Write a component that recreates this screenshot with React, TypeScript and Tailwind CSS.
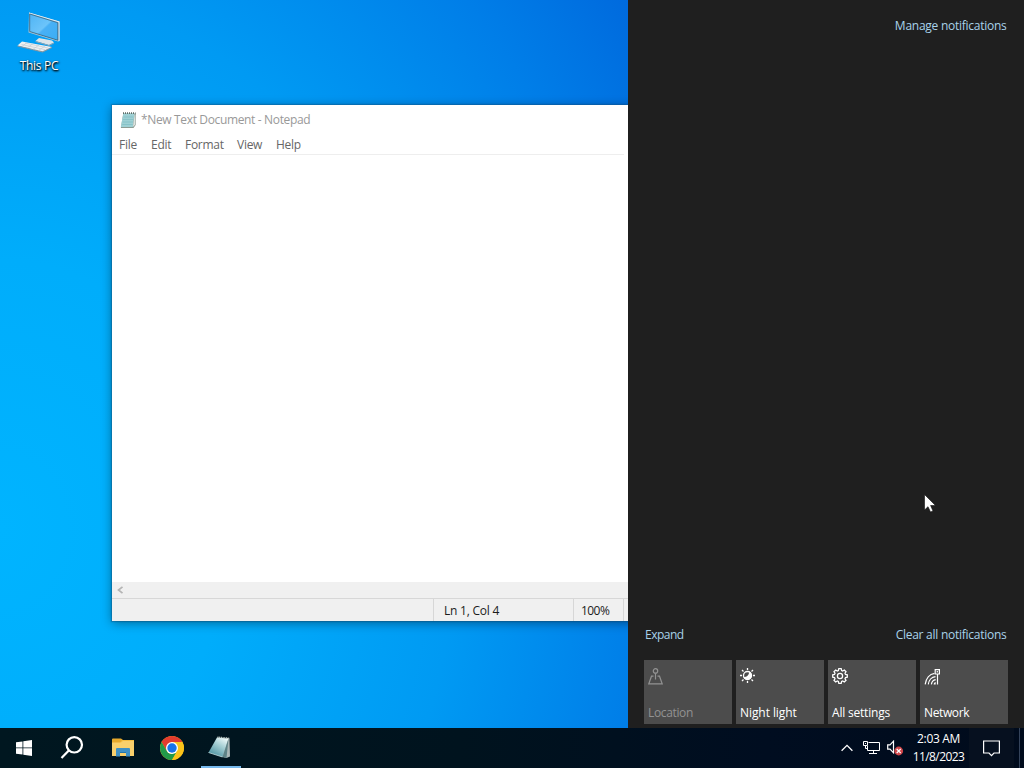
import type { ReactNode } from 'react'
import clsx from 'clsx'

const FONT = "font-['Open_Sans','Noto_Sans',sans-serif]"

const MENU = [
  { label: 'File', width: 'w-8' },
  { label: 'Edit', width: 'w-[34px]' },
  { label: 'Format', width: 'w-[52px]' },
  { label: 'View', width: 'w-[39px]' },
  { label: 'Help', width: 'w-8' },
]

function ThisPcIcon() {
  return (
    <svg width="44" height="42" viewBox="0 0 44 42">
      <defs>
        <linearGradient id="screen" x1="0" y1="0" x2="1" y2="1">
          <stop offset="0" stopColor="#4fb4f4" />
          <stop offset="0.5" stopColor="#6cc4fa" />
          <stop offset="0.55" stopColor="#48b0f5" />
          <stop offset="1" stopColor="#3aaef6" />
        </linearGradient>
      </defs>
      <path d="M12 0.500 L42.500 9.500 V29 L41 29.500 L11.500 20.500 Z" fill="#a9c6d8" />
      <path d="M12 0.500 L42.500 9.500 V29 L41.700 29.300 V10.300 L12 1.300 Z" fill="#e6eff4" />
      <path d="M12.700 2 L40.800 10.700 V28.200 L12.700 19.500 Z" fill="url(#screen)" stroke="#2f617f" strokeWidth="0.8" />
      <path d="M22 26 L35 28.500 L37 30.500 L32 33 L18.500 29 Z" fill="#dde5e9" />
      <path d="M18.500 29 L32 33 L37 30.500 V31.500 L32 34 L18.500 30 Z" fill="#8fa5b2" />
      <path d="M5 29.500 L35 35 L25.500 40 L0.500 33.500 Z" fill="#eef0f1" />
      <path d="M0.500 33.500 L25.500 39.300 L35 35 V36 L25.500 40.500 L0.500 34.500 Z" fill="#8497a3" />
      <path d="M4.500 32.500 L28 37.700 M8 31 L31 36 M10 30.500 L5 34.500 M16 31.700 L10 36 M22 33 L16 37.300 M28 34 L21.500 38.500" stroke="#c3ccd2" strokeWidth="0.7" />
    </svg>
  )
}

function NotepadSmallIcon() {
  return (
    <svg width="17" height="17" viewBox="0 0 17 17">
      <path d="M3.300 1.500 H16 V12.500 L13.500 16 H0.800 Z" fill="#8c9b93" />
      <path d="M3.300 1.500 H14.500 L12.800 15 H0.800 Z" fill="#9ed0d4" />
      <path d="M3.500 5 H13.500 M3 7.500 H13.300 M2.600 10 H13 M2.200 12.500 H12.700" stroke="#82bfc5" strokeWidth="0.8" />
      <path d="M14.600 2.500 L12.900 15 L15.500 12.300 V2.500 Z" fill="#dce3df" />
      <path d="M3 1.200 H15.500" stroke="#5d6c67" strokeWidth="1.800" strokeDasharray="1 1" />
    </svg>
  )
}

function NotepadTaskIcon() {
  return (
    <svg width="24" height="24" viewBox="0 0 24 24">
      <defs>
        <linearGradient id="pad" x1="0.8" y1="0" x2="0.2" y2="1">
          <stop offset="0" stopColor="#f0fbfb" />
          <stop offset="0.4" stopColor="#a5cfd4" />
          <stop offset="1" stopColor="#438b9a" />
        </linearGradient>
      </defs>
      <path d="M19 2 L21.500 2.500 L22 20.500 L18.500 22 L13 20.500 Z" fill="#a9b7b7" />
      <path d="M9 1.500 L20.500 2.500 L14.500 21 L0.500 16.500 Z" fill="url(#pad)" />
      <path d="M20.500 2.500 L14.500 21 L18.500 22 Z" fill="#5d8387" />
      <path d="M9.500 1.200 L21.500 2.300" stroke="#c6d2ce" strokeWidth="1.500" strokeDasharray="1 0.7" />
      <path d="M0.500 16.500 L14.500 21" stroke="#c3dde0" strokeWidth="0.8" />
    </svg>
  )
}

function WindowsLogo() {
  return (
    <svg width="16" height="16" viewBox="0 0 16 16" fill="#fff">
      <path d="M0 2.300 L6.500 1.400 V7.500 H0 Z M7.300 1.300 L16 0 V7.500 H7.300 Z M0 8.300 H6.500 V14.600 L0 13.700 Z M7.300 8.300 H16 V16 L7.300 14.700 Z" />
    </svg>
  )
}

function SearchGlyph() {
  return (
    <svg width="24" height="24" viewBox="0 0 24 24" fill="none" stroke="#fff" strokeWidth="2.200">
      <circle cx="14.300" cy="8.800" r="7.700" />
      <path d="M8.800 14.400 L1.500 22" />
    </svg>
  )
}

function FolderIcon() {
  return (
    <svg width="22" height="20" viewBox="0 0 22 20">
      <path d="M0 1.500 Q0 0.500 1 0.500 H9 L11 2 H21 Q22 2 22 3 V18 H0 Z" fill="#e6a92c" />
      <path d="M10 2 H22 V5 H8 Z" fill="#f4bd40" />
      <path d="M0 4.500 H9 L11 3 H22 V18 H0 Z" fill="#f9d06c" />
      <path d="M4 18.500 V11 Q4 10 5 10 H17 Q18 10 18 11 V18.500 H14 V14 H8 V18.500 Z" fill="#3f90c4" />
      <path d="M8 14 H14 V15 H8 Z" fill="#2276ad" />
    </svg>
  )
}

function ChromeIcon() {
  return (
    <svg width="24" height="24" viewBox="0 0 24 24">
      <circle cx="12" cy="12" r="12" fill="#fbc116" />
      <path d="M1.610 6 A12 12 0 0 1 22.390 6 H12 L6.800 15 Z" fill="#e33b2e" />
      <path d="M1.610 6 L6.800 15 A6 6 0 0 0 12 18 L17.200 15 L12 24 A12 12 0 0 1 1.610 6 Z" fill="#229a49" />
      <path d="M12 6 H22.390 A12 12 0 0 1 12 24 L17.200 15 Z" fill="#fcc31a" />
      <circle cx="12" cy="12" r="6" fill="#fff" />
      <circle cx="12" cy="12" r="4.700" fill="#1a73e8" />
    </svg>
  )
}

function LocationIcon() {
  return (
    <svg width="16" height="18" viewBox="0 0 16 18" fill="none" stroke="#929292" strokeWidth="1.200">
      <circle cx="7.500" cy="2.900" r="2.200" />
      <path d="M7.500 5.200 V11.500" />
      <path d="M5.500 8.200 H3.500 L0.800 15.800 H14.200 L11.500 8.200 H9.500" />
    </svg>
  )
}

function NightLightIcon() {
  return (
    <svg width="16" height="16" viewBox="0 0 16 16" fill="none" stroke="#fff" strokeWidth="1.300">
      <path d="M7.500 0 V2 M7.500 13 V15 M0 7.500 H2 M13 7.500 H15 M2 2 L3.500 3.500 M11.500 11.500 L13 13 M2 13 L3.500 11.500 M11.500 3.500 L13 2" />
      <circle cx="7.500" cy="7.500" r="4" />
      <path d="M9.200 3.600 A4.300 4.300 0 1 1 3.400 8.700 C6.500 9.800 9.300 7 9.200 3.600 Z" fill="#fff" stroke="none" />
    </svg>
  )
}

function SettingsIcon() {
  return (
    <svg width="16" height="16" viewBox="0 0 16 16" fill="none" stroke="#fff" strokeWidth="1.250">
      <path d="M6.800 0.700 H9.200 L9.600 2.500 L10.700 3 L12.300 2 L14 3.700 L13 5.300 L13.500 6.400 L15.300 6.800 V9.200 L13.500 9.600 L13 10.700 L14 12.300 L12.300 14 L10.700 13 L9.600 13.500 L9.200 15.300 H6.800 L6.400 13.500 L5.300 13 L3.700 14 L2 12.300 L3 10.700 L2.500 9.600 L0.700 9.200 V6.800 L2.500 6.400 L3 5.300 L2 3.700 L3.700 2 L5.300 3 L6.400 2.500 Z" />
      <circle cx="8" cy="8" r="2.600" />
    </svg>
  )
}

function NetworkIcon() {
  return (
    <svg width="17" height="17" viewBox="0 0 17 17" fill="none" stroke="#fff" strokeWidth="1.200">
      <path d="M1.200 16.300 C2 10.500 5.500 6 10.500 5.300 M4.300 16.300 C4.800 12.500 7.500 9 11.500 8.600 M7.400 16.300 C7.700 14 9.300 12 11.700 11.600" />
      <path d="M9.600 16.500 Q9.800 14.300 11.700 14 V16.500 Z" fill="#fff" stroke="none" />
      <path d="M11.200 1.700 H15.400 V6 H11.200 Z M13.500 6 V16.500 M13.300 3 V4.500" />
    </svg>
  )
}

function MonitorTrayIcon() {
  return (
    <svg width="17" height="14" viewBox="0 0 17 14" fill="none" stroke="#fff">
      <path d="M5.500 1.500 H16.500 V9.500 H4.500 V5 M10.500 9.500 V12.500 M6 12.500 H14" />
      <path d="M0.500 0.500 H4.500 V4.500 H0.500 Z M2.500 4.500 V7.500 H5 M2 2.500 H3" />
    </svg>
  )
}

function MutedIcon() {
  return (
    <svg width="17" height="16" viewBox="0 0 17 16" fill="none">
      <path d="M0.700 4.800 H3 L6.500 1.200 V12.800 L3 9.200 H0.700 Z" stroke="#fff" strokeWidth="1.200" />
      <circle cx="11.700" cy="11" r="4.400" fill="#d0464a" />
      <path d="M9.700 9 L13.700 13 M13.700 9 L9.700 13" stroke="#fff" strokeWidth="1.200" />
    </svg>
  )
}

function NotificationIcon() {
  return (
    <svg width="17" height="17" viewBox="0 0 17 17" fill="none" stroke="#fff" strokeWidth="1.200">
      <path d="M0.600 1 H16.400 V13 H11 L8.500 15.700 L6 13 H0.600 Z" />
    </svg>
  )
}

function NotepadWindow() {
  return (
    <section className="absolute left-28 top-[105px] flex h-[516px] w-[620px] flex-col bg-white shadow-[0_2px_10px_rgba(0,0,0,0.4),0_0_1px_1px_rgba(20,90,140,0.35)]">
      <header className="flex h-[30px] items-center gap-1 pl-2 text-[#999]">
        <NotepadSmallIcon />
        <span className="text-[12px] tracking-[-0.35px]">*New Text Document - Notepad</span>
      </header>
      <nav className="flex h-[19px] items-center pl-[7px] text-[12px] text-[#666]">
        {MENU.map(item => (
          <span key={item.label} className={clsx('tracking-[-0.27px]', item.width)}>{item.label}</span>
        ))}
      </nav>
      <div className="mr-[108px] h-px bg-[#eeeeee]" />
      <div className="flex-1" />
      <div className="flex h-4 items-center bg-[#f0f0f0] pl-1">
        <svg width="8" height="8" viewBox="0 0 8 8" fill="none" stroke="#b4b4b4" strokeWidth="1.700">
          <path d="M6.500 0.800 L2.500 4 L6.500 7.200" />
        </svg>
      </div>
      <footer className="flex h-[23px] border-t border-[#d7d7d7] bg-[#f0f0f0] text-[12px] text-[#1c1c1c]">
        <div className="w-[321px]" />
        <div className="flex w-[140px] items-center border-l border-[#d7d7d7] pl-2.5 pt-0.5 tracking-[-0.22px]">Ln 1, Col 4</div>
        <div className="flex w-[50px] items-center border-l border-[#d7d7d7] pl-[7px] pt-0.5 tracking-[-0.55px]">100%</div>
        <div className="flex-1 border-l border-[#d7d7d7]" />
      </footer>
    </section>
  )
}

function Tile({ label, icon, disabled, tracking }: { label: string; icon: ReactNode; disabled?: boolean; tracking: string }) {
  return (
    <button className={clsx('flex h-16 flex-col items-start justify-between bg-[#4c4c4c] pl-1 pt-2 text-[12px]', disabled ? 'text-[#929292]' : 'text-white')}>
      {icon}
      <span className={clsx('h-[19px] leading-4', tracking)}>{label}</span>
    </button>
  )
}

function ActionCenter() {
  return (
    <aside className="relative flex w-[396px] flex-col bg-[#1f1f1f] px-4 text-[12px] text-[#a9d3ea]">
      <div className="flex h-[52px] items-center justify-end pr-[1.5px] tracking-[-0.26px]">Manage notifications</div>
      <div className="flex-1" />
      <div className="flex h-[50px] items-center justify-between pl-px pr-[1.5px]">
        <span className="tracking-[-0.5px]">Expand</span>
        <span className="tracking-[-0.26px]">Clear all notifications</span>
      </div>
      <div className="mb-1 grid grid-cols-4 gap-1">
        <Tile label="Location" icon={<LocationIcon />} disabled tracking="tracking-[-0.35px]" />
        <Tile label="Night light" icon={<NightLightIcon />} tracking="tracking-[-0.07px]" />
        <Tile label="All settings" icon={<SettingsIcon />} tracking="tracking-[-0.2px]" />
        <Tile label="Network" icon={<NetworkIcon />} tracking="tracking-[-0.38px]" />
      </div>
      <svg className="absolute left-[296px] top-[494px]" width="12" height="19" viewBox="0 0 12 19">
        <path d="M0.500 0.500 V16 L4 12.700 L6.500 18 L9 17 L6.600 11.500 H11.500 Z" fill="#fff" stroke="#111" strokeWidth="0.6" />
      </svg>
    </aside>
  )
}

function Taskbar() {
  return (
    <footer className="flex h-10 items-center bg-[linear-gradient(90deg,#001720_0%,#00131e_45%,#000d20_75%,#000b1c_100%)] text-white">
      <div className="flex w-12 justify-center"><WindowsLogo /></div>
      <div className="flex w-12 justify-center"><SearchGlyph /></div>
      <div className="flex w-[54px] justify-center"><FolderIcon /></div>
      <div className="flex w-[44px] justify-center"><ChromeIcon /></div>
      <div className="ml-[7px] flex h-full w-10 items-center justify-center border-b-2 border-[#76b9ed] pr-0.5 pt-0.5"><NotepadTaskIcon /></div>
      <div className="flex flex-1 items-center justify-end">
        <svg width="12" height="8" viewBox="0 0 12 8" fill="none" stroke="#fff" strokeWidth="1.300">
          <path d="M0.600 6.700 L6 1.300 L11.400 6.700" />
        </svg>
        <div className="ml-2.5"><MonitorTrayIcon /></div>
        <div className="ml-[7px]"><MutedIcon /></div>
        <div className="ml-1.5 flex w-[57px] flex-col items-center whitespace-nowrap text-[12px] leading-[18px]">
          <span className="tracking-[-0.35px]">2:03 AM</span>
          <span className="tracking-[-0.6px]">11/8/2023</span>
        </div>
        <div className="ml-0.5 flex h-10 w-[45px] items-center justify-center bg-[#06101f] pr-px"><NotificationIcon /></div>
      </div>
      <div className="ml-[5px] h-full w-[5px] border-l border-[#34435a]" />
    </footer>
  )
}

export default function App() {
  return (
    <div className={clsx('flex h-[768px] w-[1024px] cursor-default flex-col overflow-hidden', FONT)}>
      <div className="flex min-h-0 flex-1">
        <main className="relative w-[628px] overflow-hidden bg-[radial-gradient(ellipse_760px_900px_at_0px_530px,#00b4ff_0%,#00adfb_30%,#009af3_60%,#007ee8_85%,#0060d8_110%)]">
          <div className="absolute left-0 top-3 flex w-[78px] flex-col items-center">
            <ThisPcIcon />
            <span className="mt-1 text-[12px] leading-4 tracking-[-0.3px] text-white [text-shadow:0_1px_2px_#000,1px_1px_2px_#000]">This PC</span>
          </div>
          <NotepadWindow />
        </main>
        <ActionCenter />
      </div>
      <Taskbar />
    </div>
  )
}
